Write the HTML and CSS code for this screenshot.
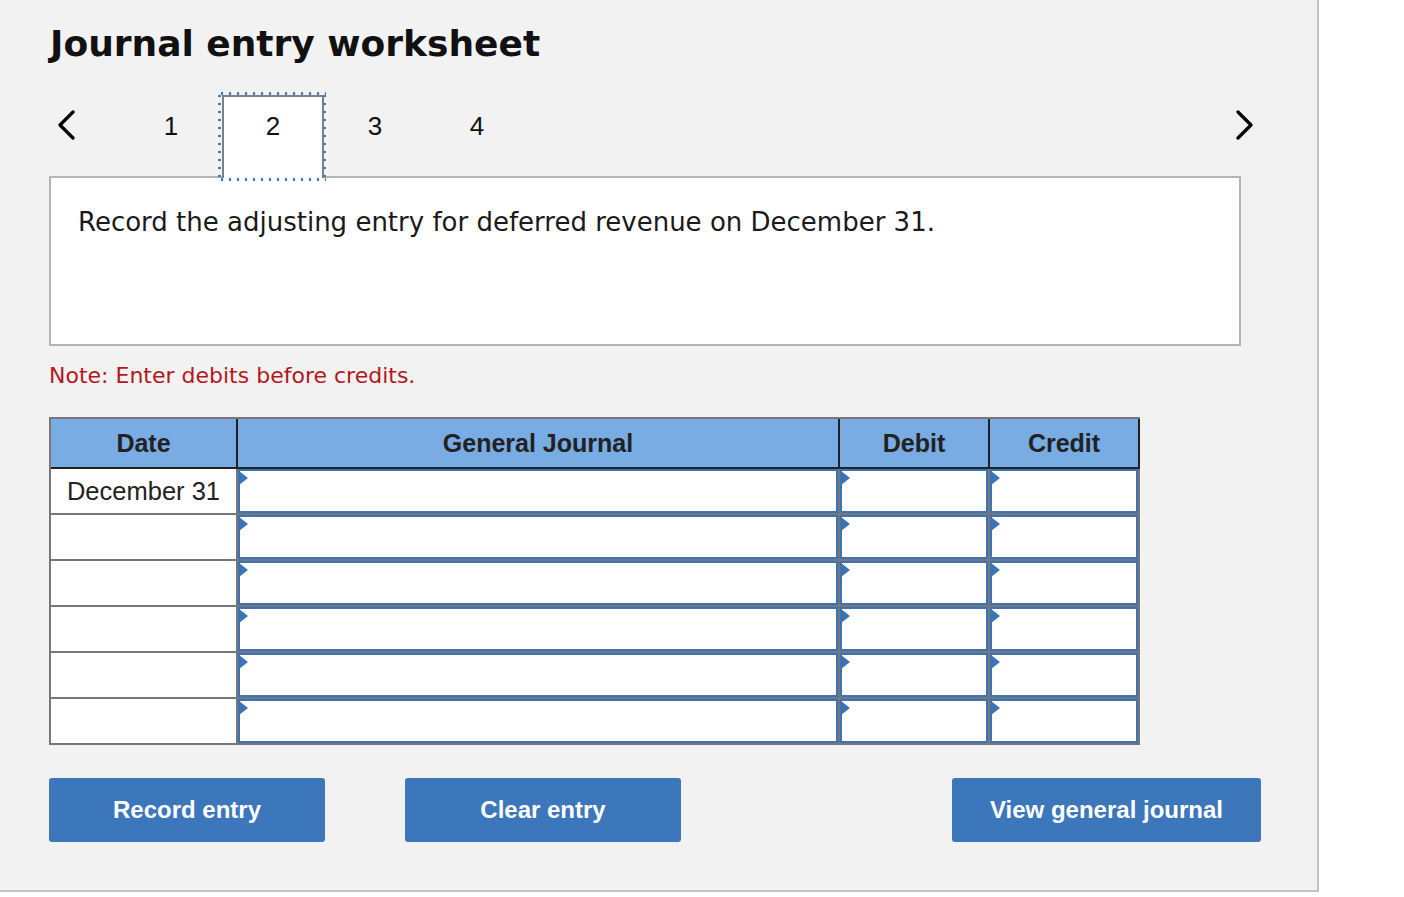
FILE: index.html
```html
<!DOCTYPE html>
<html lang="en">
<head>
  <meta charset="UTF-8">
  <meta name="viewport" content="width=device-width, initial-scale=1.0">
  <title>Journal entry worksheet</title>
  <link rel="stylesheet" href="styles.css">
</head>
<body>
  <div class="worksheet">
    <h1 class="title">Journal entry worksheet</h1>

    <div class="steps">
      <button class="arrow prev" aria-label="Previous">
        <svg width="20" height="30" viewBox="0 0 20 30"><path d="M17 2 L4 15 L17 28" /></svg>
      </button>
      <button class="step">1</button>
      <button class="step active">2</button>
      <button class="step">3</button>
      <button class="step">4</button>
      <button class="arrow next" aria-label="Next">
        <svg width="20" height="30" viewBox="0 0 20 30"><path d="M3 2 L16 15 L3 28" /></svg>
      </button>
    </div>

    <div class="prompt">
      <p>Record the adjusting entry for deferred revenue on December 31.</p>
    </div>

    <p class="note">Note: Enter debits before credits.</p>

    <table class="journal">
      <thead>
        <tr>
          <th class="col-date">Date</th>
          <th class="col-account">General Journal</th>
          <th class="col-amount">Debit</th>
          <th class="col-amount">Credit</th>
        </tr>
      </thead>
      <tbody>
        <tr>
          <td class="date">December 31</td>
          <td><div class="entry"></div></td>
          <td><div class="entry"></div></td>
          <td><div class="entry"></div></td>
        </tr>
        <tr>
          <td class="date"></td>
          <td><div class="entry"></div></td>
          <td><div class="entry"></div></td>
          <td><div class="entry"></div></td>
        </tr>
        <tr>
          <td class="date"></td>
          <td><div class="entry"></div></td>
          <td><div class="entry"></div></td>
          <td><div class="entry"></div></td>
        </tr>
        <tr>
          <td class="date"></td>
          <td><div class="entry"></div></td>
          <td><div class="entry"></div></td>
          <td><div class="entry"></div></td>
        </tr>
        <tr>
          <td class="date"></td>
          <td><div class="entry"></div></td>
          <td><div class="entry"></div></td>
          <td><div class="entry"></div></td>
        </tr>
        <tr>
          <td class="date"></td>
          <td><div class="entry"></div></td>
          <td><div class="entry"></div></td>
          <td><div class="entry"></div></td>
        </tr>
      </tbody>
    </table>

    <div class="actions">
      <button class="action record">Record entry</button>
      <button class="action clear">Clear entry</button>
      <button class="action view">View general journal</button>
    </div>
  </div>
</body>
</html>
```

FILE: styles.css
```css
body {
  margin: 0;
  background-color: #fff;
  font-family: 'DejaVu Sans', Verdana, sans-serif;
}

.worksheet {
  box-sizing: border-box;
  width: 1319px;
  height: 892px;
  padding: 23px 0 0 49px;
  background-color: #f2f2f2;
  border-right: 2px solid #c4c4c4;
  border-bottom: 2px solid #c4c4c4;
}

.title {
  margin: 0 0 0 1px;
  font-size: 36px;
  line-height: 42px;
  font-weight: bold;
  color: #111;
}

.steps {
  display: flex;
  align-items: flex-start;
  width: 1210px;
  height: 81px;
  margin-top: 30px;
}

button {
  font-family: 'Liberation Sans', Arial, sans-serif;
  cursor: pointer;
}

.arrow {
  background: none;
  border: none;
  padding: 0;
  margin-top: 15px;
  height: 30px;
}

.arrow svg path {
  fill: none;
  stroke: #000;
  stroke-width: 3.2;
  stroke-linecap: round;
  stroke-linejoin: round;
}

.arrow.prev {
  width: 71px;
  padding-left: 7px;
  text-align: left;
}

.arrow.next {
  margin-left: auto;
  margin-right: 4px;
}

.step {
  box-sizing: border-box;
  width: 102px;
  height: 81px;
  padding: 14px 0 0;
  background: none;
  border: 2px solid transparent;
  border-bottom: none;
  font-size: 26px;
  line-height: 30px;
  color: #111;
  display: flex;
  justify-content: center;
  align-items: flex-start;
}

.step.active {
  position: relative;
  z-index: 1;
  height: 83px;
  margin-bottom: -2px;
  background-color: #fff;
  border-color: #808080;
}

/* dotted focus ring, round dots spaced wider than a plain dotted outline */
.step.active::after {
  content: '';
  position: absolute;
  top: -5px;
  left: -6px;
  right: -4px;
  bottom: -3px;
  background:
    radial-gradient(circle, #3b7bc8 1.1px, transparent 1.6px) top left / 8px 3px repeat-x,
    radial-gradient(circle, #3b7bc8 1.1px, transparent 1.6px) bottom left / 8px 3px repeat-x,
    radial-gradient(circle, #3b7bc8 1.1px, transparent 1.6px) top left / 3px 8px repeat-y,
    radial-gradient(circle, #3b7bc8 1.1px, transparent 1.6px) top right / 3px 8px repeat-y;
  pointer-events: none;
}

.prompt {
  box-sizing: border-box;
  width: 1192px;
  height: 170px;
  padding: 29px 27px 0;
  background-color: #fff;
  border: 2px solid #b4b4b4;
}

.prompt p {
  margin: 0;
  font-size: 26px;
  line-height: 30px;
  color: #1a1a1a;
}

.note {
  margin: 17px 0 0;
  font-size: 22px;
  line-height: 26px;
  color: #b5171b;
}

.journal {
  margin-top: 28px;
  border-collapse: separate;
  border-spacing: 0;
  border-top: 2px solid #777;
  border-left: 2px solid #777;
  font-family: 'Liberation Sans', Arial, sans-serif;
  font-size: 25px;
  color: #222;
}

.journal th {
  height: 48px;
  padding: 0;
  background-color: #78ace3;
  border-right: 2px solid #222;
  border-bottom: 2px solid #222;
  font-weight: bold;
  text-align: center;
}

.col-date {
  width: 185px;
}

.col-account {
  width: 600px;
}

.col-amount {
  width: 148px;
}

.journal td {
  height: 44px;
  padding: 0;
  background-color: #fff;
  border-right: 2px solid #777;
  border-bottom: 2px solid #777;
}

.journal td.date {
  text-align: center;
  font-size: 25.5px;
  line-height: 30px;
}

.entry {
  position: relative;
  box-sizing: border-box;
  height: 44px;
  border: 2px solid #3a74b7;
  background-color: #fff;
}

.entry::before {
  content: '';
  position: absolute;
  top: 0;
  left: -1px;
  border-left: 9px solid #3a74b7;
  border-top: 7px solid transparent;
  border-bottom: 7px solid transparent;
}

.actions {
  display: flex;
  margin-top: 33px;
}

.action {
  height: 64px;
  padding: 0;
  background-color: #3b77ba;
  border: none;
  border-radius: 3px;
  color: #fff;
  font-size: 24px;
  font-weight: bold;
}

.action.record,
.action.clear {
  width: 276px;
}

.action.clear {
  margin-left: 80px;
}

.action.view {
  width: 309px;
  margin-left: 271px;
}
```
